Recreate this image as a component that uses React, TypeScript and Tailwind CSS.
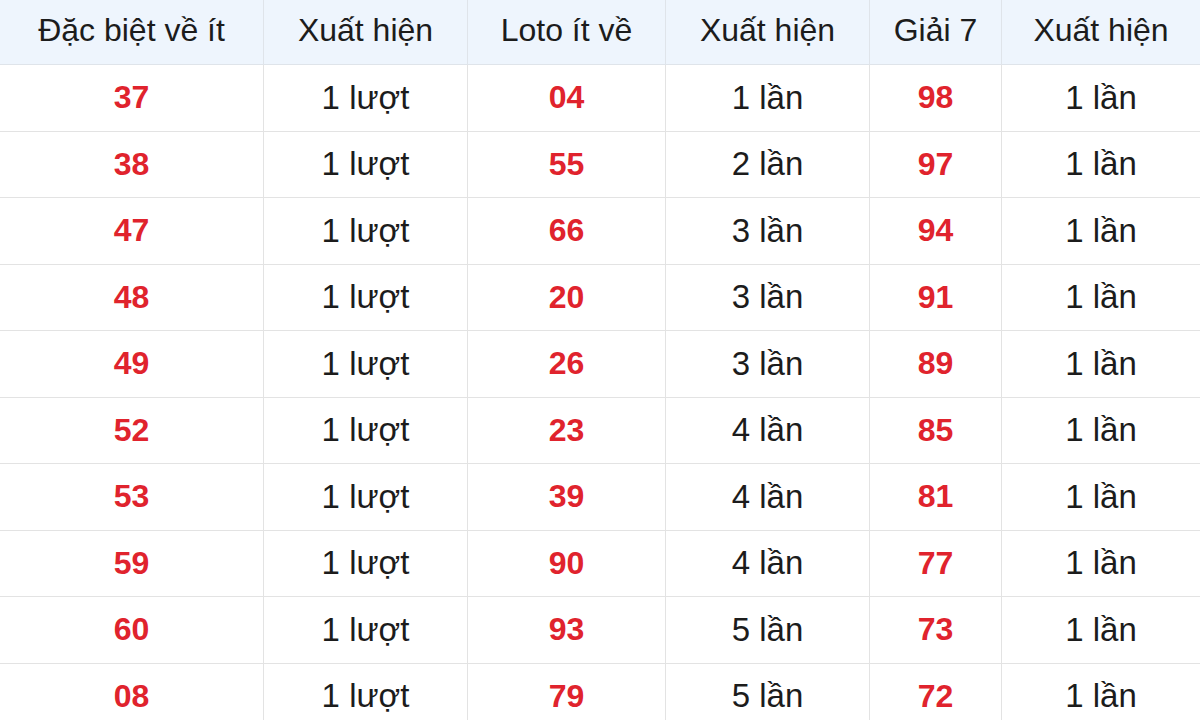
import React from 'react';

const headers = ['Đặc biệt về ít', 'Xuất hiện', 'Loto ít về', 'Xuất hiện', 'Giải 7', 'Xuất hiện'];

const rows: [string, string, string, string, string, string][] = [
  ['37', '1 lượt', '04', '1 lần', '98', '1 lần'],
  ['38', '1 lượt', '55', '2 lần', '97', '1 lần'],
  ['47', '1 lượt', '66', '3 lần', '94', '1 lần'],
  ['48', '1 lượt', '20', '3 lần', '91', '1 lần'],
  ['49', '1 lượt', '26', '3 lần', '89', '1 lần'],
  ['52', '1 lượt', '23', '4 lần', '85', '1 lần'],
  ['53', '1 lượt', '39', '4 lần', '81', '1 lần'],
  ['59', '1 lượt', '90', '4 lần', '77', '1 lần'],
  ['60', '1 lượt', '93', '5 lần', '73', '1 lần'],
  ['08', '1 lượt', '79', '5 lần', '72', '1 lần'],
];

const cols = 'grid grid-cols-[264px_204px_198px_204px_132px_198px]';

export default function App() {
  return (
    <div className="w-[1200px] h-[720px] overflow-hidden bg-white font-['Liberation_Sans',Arial,sans-serif] text-[#1c1c1c]">
      <div className={`${cols} h-[65px] bg-[#eef5fd] border-b border-[#dfe4ea]`}>
        {headers.map((h, i) => (
          <div
            key={i}
            className={i < 5 ? 'flex items-center justify-center text-[32px] border-r border-[#dfe4ea] pb-[4px]' : 'flex items-center justify-center text-[32px] pb-[4px]'}
          >
            {h}
          </div>
        ))}
      </div>
      {rows.map((r, ri) => (
        <div key={ri} className={`${cols} h-[66.5px] border-b border-[#e3e3e3]`}>
          {r.map((c, ci) => (
            <div
              key={ci}
              className={[
                'flex items-center justify-center pb-[1px]',
                ci < 5 ? 'border-r border-[#e3e3e3]' : '',
                ci % 2 === 0 ? 'text-[32px] font-bold text-[#e0232d]' : 'text-[33px] text-[#1c1c1c]',
              ].join(' ')}
            >
              {c}
            </div>
          ))}
        </div>
      ))}
    </div>
  );
}
